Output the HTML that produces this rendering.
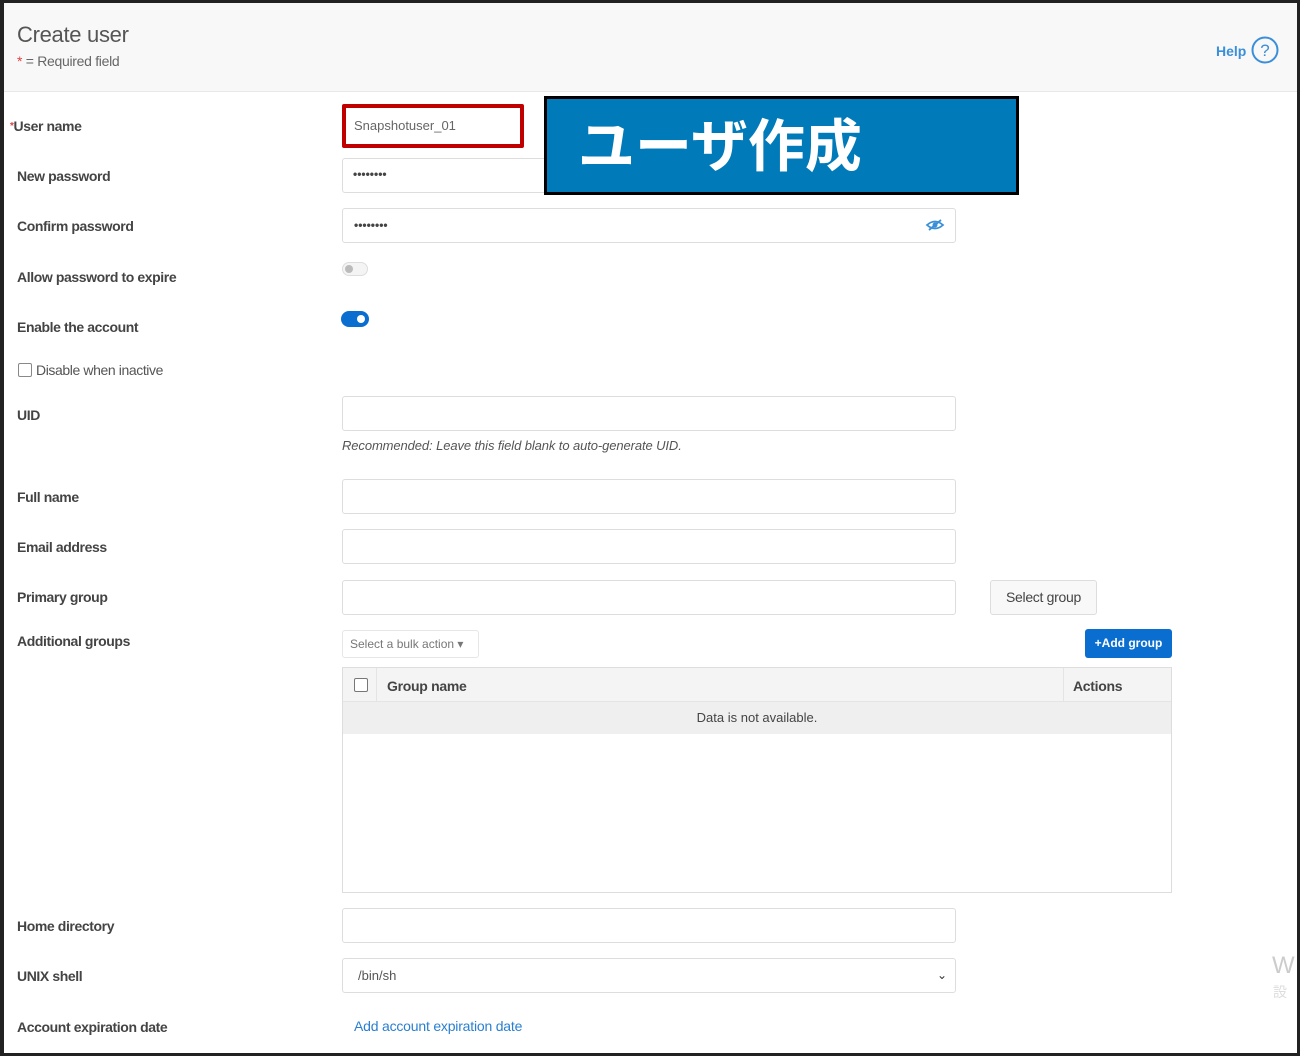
<!DOCTYPE html>
<html><head><meta charset="utf-8"><style>
*{box-sizing:border-box;margin:0;padding:0}
body{width:1300px;height:1056px;position:relative;background:#fff;font-family:"Liberation Sans",sans-serif;color:#333;overflow:hidden}
.a{position:absolute}
.frame{left:0;top:0;width:1300px;height:1056px;border:3px solid #222;border-left-width:4px;z-index:5;pointer-events:none}
.hdr{left:0;top:0;width:1300px;height:92px;background:#f8f8f8;border-bottom:1px solid #e8e8e8}
.lbl{left:17px;font-size:14px;font-weight:bold;color:#444;letter-spacing:-0.4px}
.inp{left:342px;width:614px;height:35px;border:1px solid #ddd;border-radius:3px;background:#fff}
.dots{font-size:12px;color:#444;padding-left:11px;line-height:33px;font-weight:bold}
</style></head><body>
<div class="a hdr"></div>
<div class="a" style="left:17px;top:22px;font-size:22px;color:#555;letter-spacing:-0.3px">Create user</div>
<div class="a" style="left:17px;top:53px;font-size:14px;color:#666;letter-spacing:-0.3px"><span style="color:#e04040">*</span> = Required field</div>
<div class="a" style="left:1216px;top:43px;font-size:14px;color:#3a8fd8;font-weight:bold">Help</div>
<svg class="a" style="left:1250px;top:35px" width="30" height="30"><circle cx="15" cy="15" r="12.5" fill="none" stroke="#3a8fd8" stroke-width="2"/><text x="15" y="21" font-size="17" text-anchor="middle" fill="#3a8fd8" font-family="Liberation Sans">?</text></svg>

<div class="a lbl" style="top:118px;left:10px"><span style="color:#e04040;font-size:10px;position:relative;top:-2px">*</span>User name</div>
<div class="a inp" style="top:158px"></div>
<div class="a" style="left:342px;top:104px;width:182px;height:44px;border:4px solid #c00000;border-radius:2px;background:#fff;font-size:13px;color:#666;padding:10px 0 0 8px">Snapshotuser_01</div>
<div class="a lbl" style="top:168px">New password</div>
<div class="a dots" style="left:342px;top:158px">••••••••</div>
<div class="a lbl" style="top:218px">Confirm password</div>
<div class="a inp dots" style="top:208px">••••••••</div>
<svg class="a" style="left:925px;top:218px" width="20" height="14"><path d="M2 7 Q10 0 18 7 Q10 14 2 7Z" fill="none" stroke="#3a8fd8" stroke-width="1.8"/><circle cx="10" cy="7" r="2.5" fill="#3a8fd8"/><path d="M4 12 L16 2" stroke="#3a8fd8" stroke-width="1.8"/></svg>

<div class="a" style="left:544px;top:96px;width:475px;height:99px;background:#007ab8;border:3px solid #000;color:#fff;font-size:57px;font-family:'Noto Sans CJK JP',sans-serif;font-weight:bold;padding-left:31px;line-height:86px">ユーザ作成</div>

<div class="a lbl" style="top:269px">Allow password to expire</div>
<div class="a" style="left:342px;top:262px;width:26px;height:14px;border-radius:7px;border:1px solid #ddd;background:#f4f4f4"><div style="position:absolute;left:2px;top:2px;width:8px;height:8px;border-radius:50%;background:#bbb"></div></div>
<div class="a lbl" style="top:319px">Enable the account</div>
<div class="a" style="left:341px;top:311px;width:28px;height:16px;border-radius:8px;background:#0a6ed1"><div style="position:absolute;right:4px;top:4px;width:8px;height:8px;border-radius:50%;background:#fff"></div></div>
<div class="a" style="left:18px;top:363px;width:14px;height:14px;border:1px solid #888;border-radius:2px"></div>
<div class="a" style="left:36px;top:362px;font-size:14px;color:#555;letter-spacing:-0.4px">Disable when inactive</div>
<div class="a lbl" style="top:407px">UID</div>
<div class="a inp" style="top:396px"></div>
<div class="a" style="left:342px;top:438px;font-size:13px;font-style:italic;color:#555;letter-spacing:-0.1px">Recommended: Leave this field blank to auto-generate UID.</div>
<div class="a lbl" style="top:489px">Full name</div>
<div class="a inp" style="top:479px"></div>
<div class="a lbl" style="top:539px">Email address</div>
<div class="a inp" style="top:529px"></div>
<div class="a lbl" style="top:589px">Primary group</div>
<div class="a inp" style="top:580px"></div>
<div class="a" style="left:990px;top:580px;width:107px;height:35px;border:1px solid #ddd;border-radius:3px;background:#f8f8f8;font-size:14px;color:#444;text-align:center;line-height:33px;letter-spacing:-0.3px">Select group</div>
<div class="a lbl" style="top:633px">Additional groups</div>
<div class="a" style="left:342px;top:630px;width:137px;height:28px;border:1px solid #e6e6e6;border-radius:3px;font-size:12px;color:#777;line-height:26px;padding-left:7px">Select a bulk action ▾</div>
<div class="a" style="left:1085px;top:629px;width:87px;height:29px;border-radius:3px;background:#0a6ed1;color:#fff;font-size:12px;font-weight:bold;text-align:center;line-height:29px">+Add group</div>
<div class="a" style="left:342px;top:667px;width:830px;height:226px;border:1px solid #ddd">
 <div style="position:absolute;left:0;top:0;width:828px;height:34px;background:#f4f4f4;border-bottom:1px solid #e4e4e4"></div>
 <div style="position:absolute;left:33px;top:0;width:1px;height:34px;background:#e4e4e4"></div>
 <div style="position:absolute;left:720px;top:0;width:1px;height:34px;background:#e4e4e4"></div>
 <div style="position:absolute;left:11px;top:10px;width:14px;height:14px;border:1px solid #777;border-radius:2px;background:#fff"></div>
 <div style="position:absolute;left:44px;top:10px;font-size:14px;font-weight:bold;color:#444;letter-spacing:-0.3px">Group name</div>
 <div style="position:absolute;left:730px;top:10px;font-size:14px;font-weight:bold;color:#444;letter-spacing:-0.3px">Actions</div>
 <div style="position:absolute;left:0;top:34px;width:828px;height:32px;background:#efefef;text-align:center;font-size:13px;color:#444;line-height:32px">Data is not available.</div>
</div>
<div class="a lbl" style="top:918px">Home directory</div>
<div class="a inp" style="top:908px"></div>
<div class="a lbl" style="top:968px">UNIX shell</div>
<div class="a inp" style="top:958px;font-size:13px;color:#555;padding-left:15px;line-height:33px">/bin/sh<span style="position:absolute;right:8px;top:0;font-size:12px;color:#333">⌄</span></div>
<div class="a lbl" style="top:1019px">Account expiration date</div>
<div class="a" style="left:354px;top:1018px;font-size:14px;color:#2a7fd0;letter-spacing:-0.2px">Add account expiration date</div>
<div class="a" style="left:1272px;top:952px;font-size:24px;color:#ccc">W</div>
<div class="a" style="left:1273px;top:982px;font-size:14px;color:#ddd;font-family:'Noto Sans CJK JP',sans-serif">設</div>
<div class="a frame"></div>
</body></html>
